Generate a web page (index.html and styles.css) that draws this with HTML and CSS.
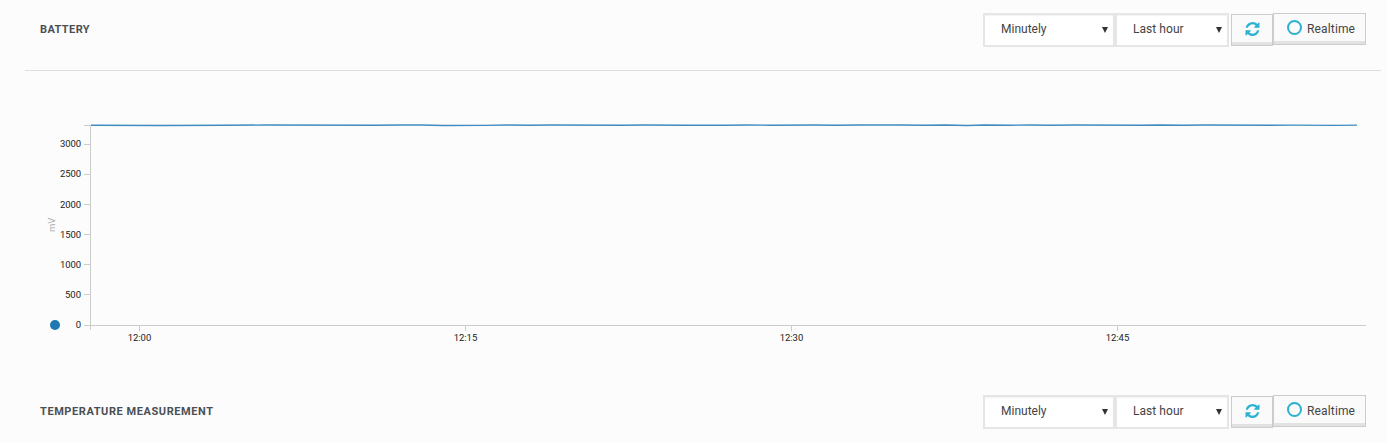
FILE: index.html
```html
<!DOCTYPE html>
<html lang="en">
<head>
<meta charset="utf-8">
<title>Measurements</title>
<link rel="stylesheet" href="styles.css">
</head>
<body>
<svg class="defs" aria-hidden="true">
  <symbol id="refresh" viewBox="0 0 1536 1536">
    <path d="M1511 928q0 5-1 7-64 268-268 434.500T764 1536q-146 0-282.500-55T238 1324l-129 129q-19 19-45 19t-45-19-19-45V960q0-26 19-45t45-19h448q26 0 45 19t19 45-19 45l-137 137q71 66 161 102t187 36q134 0 250-65t186-179q11-17 53-117 8-23 30-23h192q13 0 22.500 9.500t9.500 22.500zm25-800v448q0 26-19 45t-45 19h-448q-26 0-45-19t-19-45 19-45l138-138Q969 256 768 256q-134 0-250 65T332 500q-11 17-53 117-8 23-30 23H50q-13 0-22.500-9.500T18 608v-7q65-268 270-434.500T768 0q146 0 284 55.500T1297 212l130-129q19-19 45-19t45 19 19 45z"/>
  </symbol>
</svg>
<section class="panel">
  <header class="panel-head">
    <h2 class="title title-battery">BATTERY</h2>
    <div class="controls">
      <div class="select interval"><span>Minutely</span><i class="arrow"></i></div>
      <div class="select period"><span>Last hour</span><i class="arrow"></i></div>
      <button class="btn refresh" aria-label="Refresh"><svg width="15" height="14"><use href="#refresh"/></svg></button>
      <button class="btn realtime"><i class="ring"></i><span>Realtime</span></button>
    </div>
  </header>
  <svg class="chart" width="1387" height="310" viewBox="0 71 1387 310">
    <g class="axis">
      <path d="M84 125.500H90.500V330M84 144.500h6M84 174.500h6M84 204.500h6M84 234.500h6M84 264.500h6M84 294.500h6M84 325.500H1366M139.500 325v6M465.500 325v6M791.500 325v6M1117.500 325v6"/>
    </g>
    <g class="labels ylabels">
      <text x="81" y="147" textLength="21">3000</text>
      <text x="81" y="177" textLength="21">2500</text>
      <text x="81" y="208" textLength="21">2000</text>
      <text x="81" y="238" textLength="21">1500</text>
      <text x="81" y="268" textLength="21">1000</text>
      <text x="81" y="298" textLength="16">500</text>
      <text x="81" y="328">0</text>
    </g>
    <g class="labels xlabels">
      <text x="139.500" y="341" textLength="23.500">12:00</text>
      <text x="465.500" y="341" textLength="23.500">12:15</text>
      <text x="791.500" y="341" textLength="23.500">12:30</text>
      <text x="1117.500" y="341" textLength="23.500">12:45</text>
    </g>
    <text class="unit" transform="translate(55 232) rotate(-90)">mV</text>
    <circle class="dot" cx="55" cy="325" r="5"/>
    <path class="series" d="M91 125.200L160 125.500L225 125.300L265 125L375 125.300L400 125L422 125L443 125.500L485 125.400L508 125L530 125.200L550 125L620 125.200L645 125L685 125.300L725 125.300L748 125L770 125.200L815 125L835 125.300L860 125L900 125L925 125.200L945 125L967 125.500L985 125L1010 125.200L1030 125L1050 125.200L1075 125L1140 125.300L1160 125L1183 125.200L1205 125L1270 125.300L1292 125.100L1335 125.400L1357 125.100"/>
  </svg>
</section>
<section class="panel panel-last">
  <header class="panel-head">
    <h2 class="title title-temperature">TEMPERATURE MEASUREMENT</h2>
    <div class="controls">
      <div class="select interval"><span>Minutely</span><i class="arrow"></i></div>
      <div class="select period"><span>Last hour</span><i class="arrow"></i></div>
      <button class="btn refresh" aria-label="Refresh"><svg width="15" height="14"><use href="#refresh"/></svg></button>
      <button class="btn realtime"><i class="ring"></i><span>Realtime</span></button>
    </div>
  </header>
</section>
</body>
</html>
```
FILE: styles.css
```css
* { box-sizing: border-box; }
body {
  margin: 0;
  height: 443px;
  background: #fcfcfc;
  color: #444;
  font-family: Roboto, "Liberation Sans", sans-serif;
  font-size: 12px;
}
.defs { display: none; }
.panel { height: 382px; }
.panel-last { height: 61px; }
.panel-head {
  display: flex;
  justify-content: space-between;
  align-items: flex-start;
  height: 71px;
  margin: 0 6px 0 25px;
  padding: 13px 15px 0;
  border-bottom: 1px solid #ddd;
}
.panel-last .panel-head { height: 61px; border-bottom: 0; }
.title {
  margin: 0;
  font-size: 11px;
  line-height: 34px;
  font-weight: 700;
  color: #4a4f53;
  white-space: nowrap;
}
.title-battery { letter-spacing: 0.4px; }
.title-temperature { letter-spacing: 0.57px; }
.controls { display: flex; align-items: flex-start; }
.select {
  display: flex;
  justify-content: space-between;
  align-items: center;
  height: 34px;
  padding: 0 5px 2px 16px;
  border: 2px solid #e5e6e6;
  background: #fff;
  box-shadow: inset 0 1px 1px #f3f3f3;
}
.interval { width: 132px; }
.period { width: 114px; margin-right: 2px; letter-spacing: 0.05px; }
.arrow {
  border: 3.500px solid transparent;
  border-top: 6px solid #333;
  border-bottom: 0;
  margin-top: 2px;
}
.btn {
  display: flex;
  align-items: center;
  height: 32px;
  margin: 0;
  border: 1px solid #ccc;
  background: #fafafa;
  box-shadow: inset 0 -3px #e2e2e2;
  color: #444;
  font: inherit;
}
.refresh { width: 42px; margin-top: 1px; padding: 0 0 3px 13px; }
.refresh svg { fill: #29b2d2; }
.realtime { width: 93px; padding: 0 0 1px 13px; letter-spacing: 0.15px; }
.ring {
  width: 15px;
  height: 15px;
  margin: -3px 5px 0 0;
  border: 2px solid #29b2d2;
  border-radius: 50%;
}
.chart { display: block; }
.axis path { fill: none; stroke: #ccc; }
.labels { font-size: 9.500px; fill: #222; }
.ylabels { text-anchor: end; }
.xlabels { text-anchor: middle; }
.unit { font-size: 9.500px; fill: #aaa; }
.dot { fill: #1f77b4; }
.series { fill: none; stroke: #1f77b4; stroke-width: 1.400px; opacity: 0.85; }
```
